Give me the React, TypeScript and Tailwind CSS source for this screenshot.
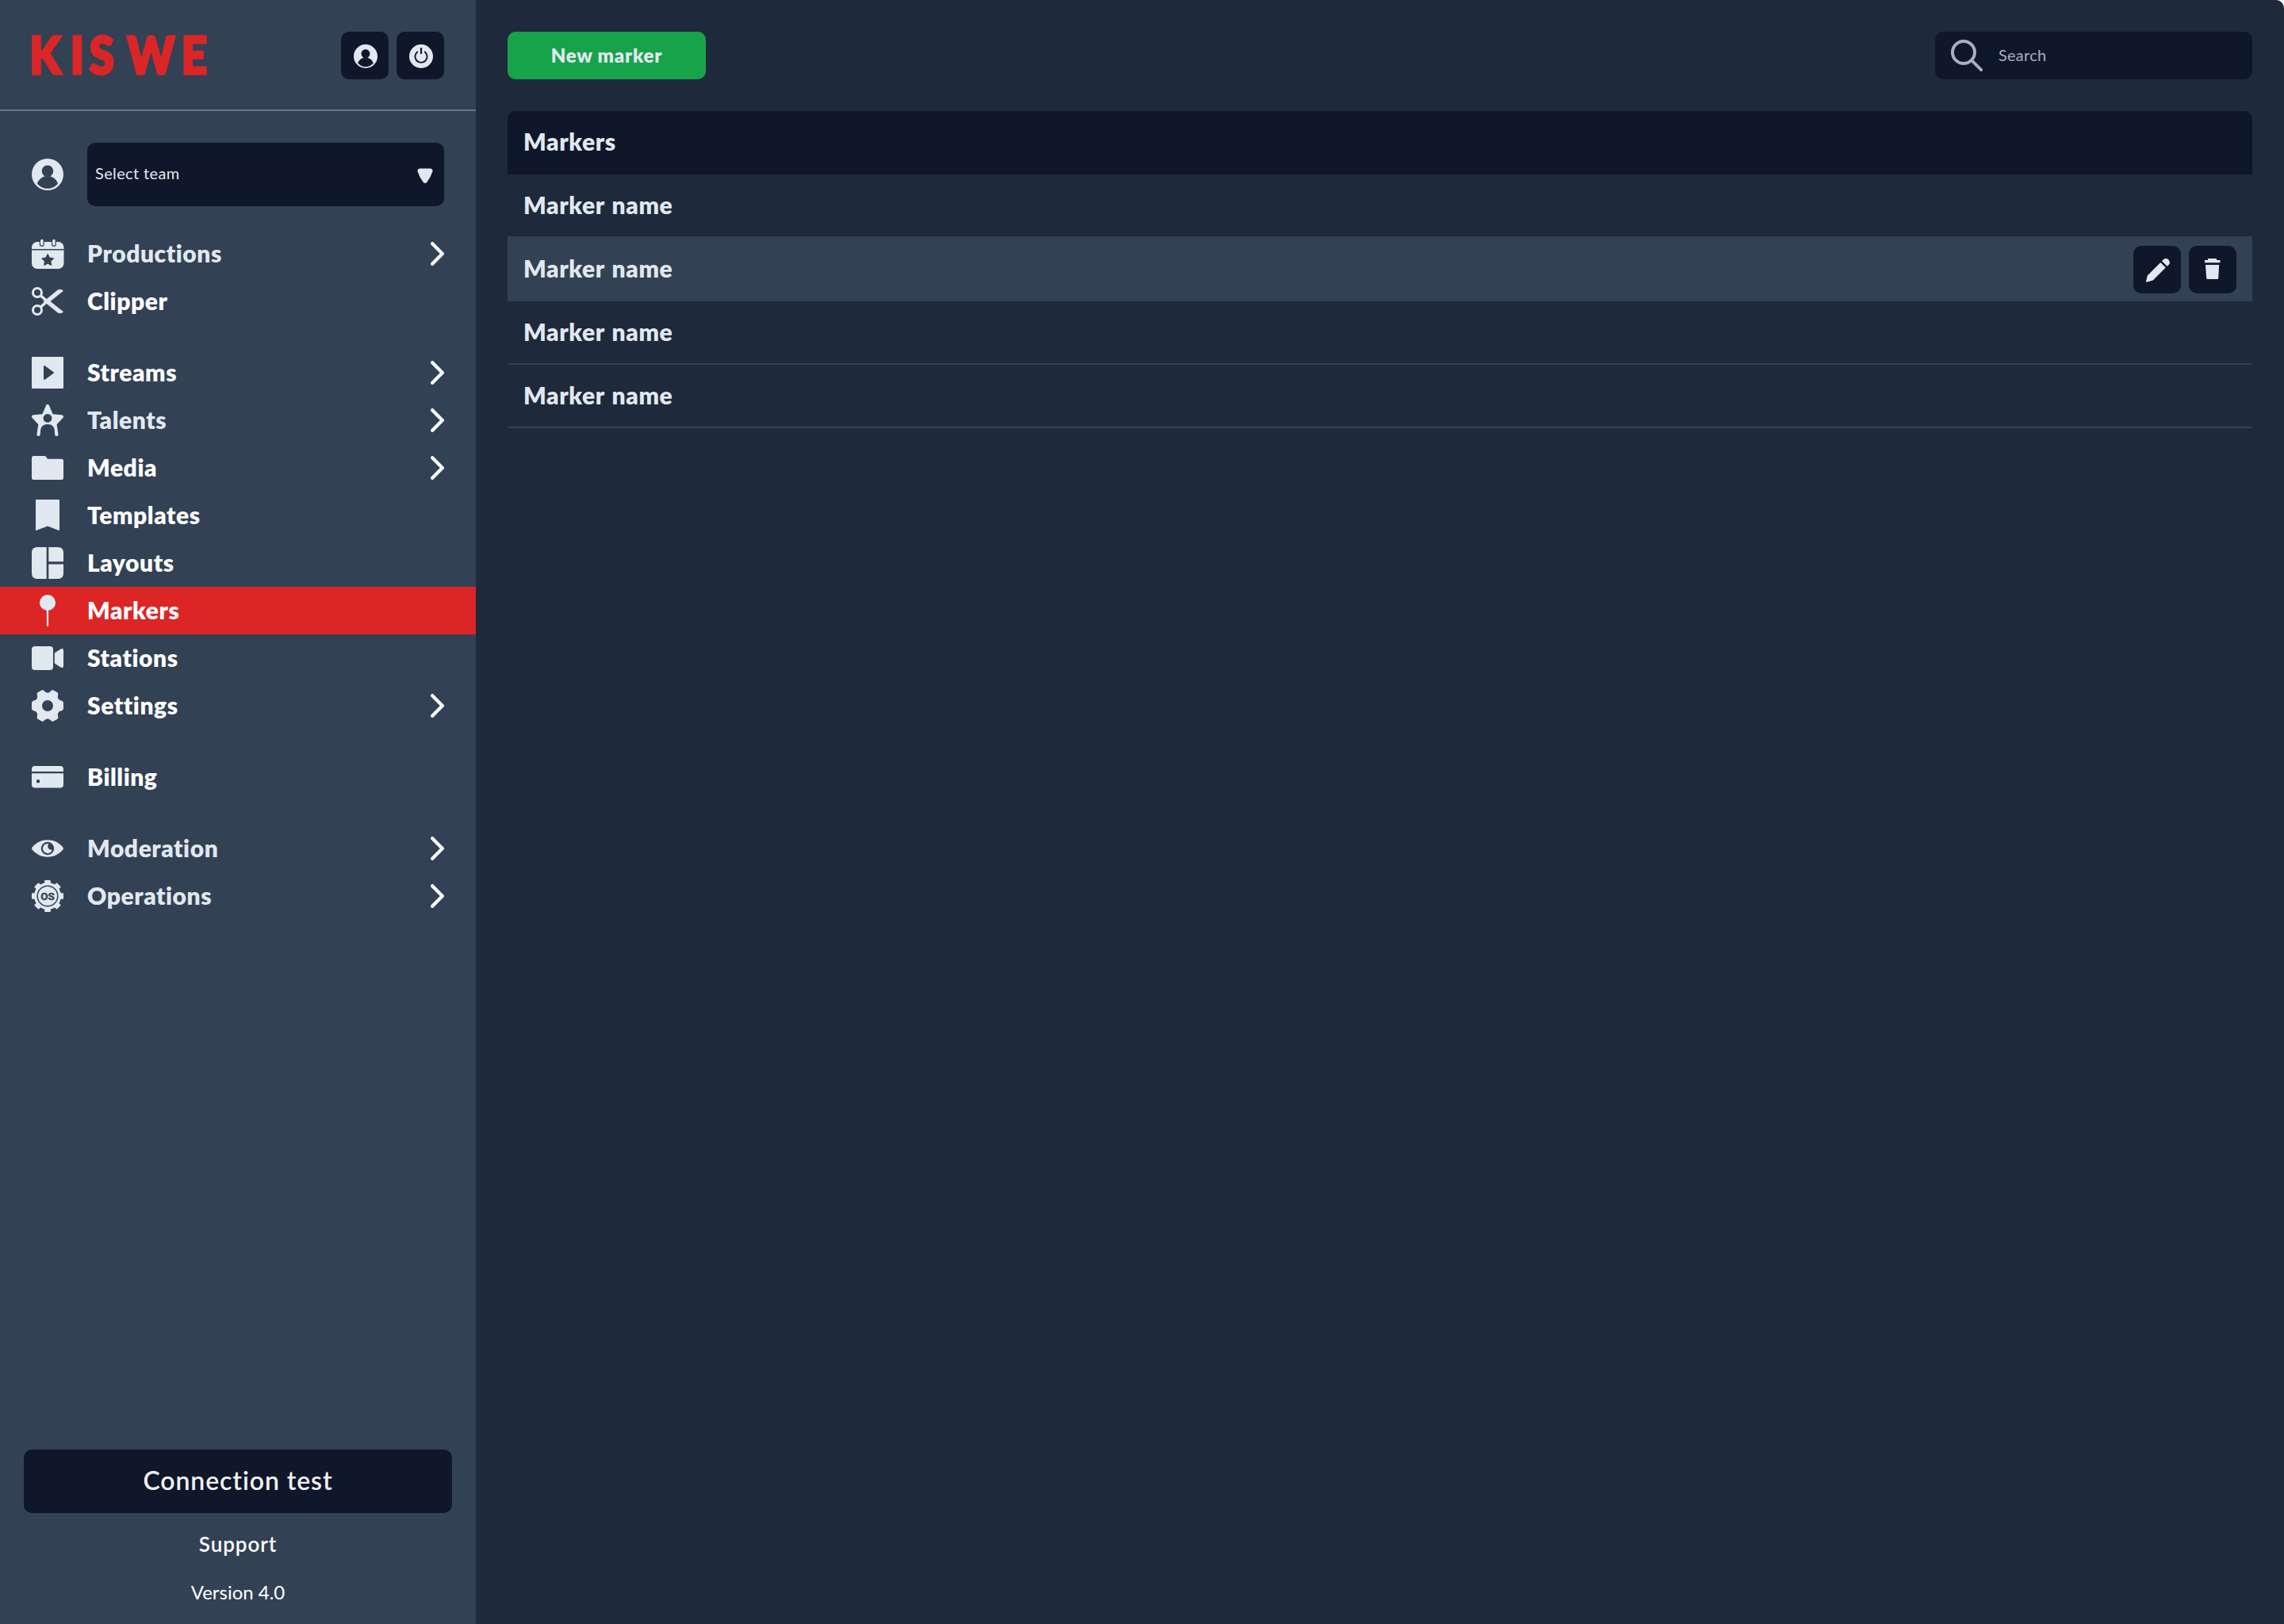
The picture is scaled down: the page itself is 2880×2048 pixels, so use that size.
import type { ReactNode } from 'react';

type IconProps = { className?: string };

const UserIcon = ({ className }: IconProps) => (
    <svg viewBox="0 0 40 40" className={className} fill="currentColor">
        <path
            fillRule="evenodd"
            d="M20 0a20 20 0 1 1 0 40a20 20 0 0 1 0-40zM20 8.4c-4 0-7.2 3.2-7.2 7.3c0 3 1.6 5.3 4 6.6C12 23.700 8.500 27 7 31.400C10.200 35.400 14.900 37.700 20 37.700S29.800 35.400 33 31.400C31.500 27 28 23.700 23.200 22.300c2.400-1.300 4-3.600 4-6.600c0-4.100-3.200-7.300-7.200-7.300z"
        />
    </svg>
);

const PowerIcon = ({ className }: IconProps) => (
    <svg viewBox="0 0 30 30" className={className} fill="none">
        <circle cx="15" cy="15" r="15" fill="currentColor" />
        <path d="M10.200 9.400a7.600 7.600 0 1 0 9.600 0" stroke="#0f172a" strokeWidth="1.900" strokeLinecap="round" />
        <path d="M15 5.200v6" stroke="#0f172a" strokeWidth="2.200" strokeLinecap="round" />
    </svg>
);

const CalendarIcon = ({ className }: IconProps) => (
    <svg viewBox="0 0 40 40" className={className} fill="currentColor">
        <rect x="0" y="5" width="40.500" height="34" rx="7" />
        <path d="M0 14.800h40.500" stroke="#334155" strokeWidth="1.400" />
        <path d="M12.800 3.500v4.500M27.900 3.500v4.500" stroke="#334155" strokeWidth="6" strokeLinecap="round" />
        <path d="M12.800 3.500v4.500M27.900 3.500v4.500" stroke="currentColor" strokeWidth="3.600" strokeLinecap="round" />
        <path
            d="M20.200 20.800l2.200 4.400 4.800.7-3.500 3.400.8 4.800-4.300-2.300-4.300 2.300.8-4.800-3.500-3.400 4.800-.7z"
            fill="#334155"
            stroke="#334155"
            strokeWidth="1.400"
            strokeLinejoin="round"
        />
    </svg>
);

const ScissorsIcon = ({ className }: IconProps) => (
    <svg viewBox="0 0 40 40" className={className} fill="none" stroke="currentColor">
        <circle cx="7" cy="9" r="5.500" strokeWidth="3" />
        <circle cx="7" cy="31" r="5.500" strokeWidth="3" />
        <path d="M11.500 13L20 20.500M11.500 27L20 19.500" strokeWidth="3.600" />
        <path
            d="M15 20.500L32.500 6.200c2.200-1.500 5-1.300 7 .6L23 20l16.500 13.200c-2 1.900-4.800 2.100-7 .6L15 19.500z"
            fill="currentColor"
            strokeWidth=".8"
            strokeLinejoin="round"
        />
    </svg>
);

const StreamIcon = ({ className }: IconProps) => (
    <svg viewBox="0 0 40 40" className={className} fill="currentColor">
        <rect width="40" height="40" rx="1.200" />
        <path d="M16 12l11 8-11 8z" fill="#334155" stroke="#334155" strokeWidth="2" strokeLinejoin="round" />
    </svg>
);

const TalentIcon = ({ className }: IconProps) => (
    <svg viewBox="0 0 40 40" className={className} fill="currentColor">
        <path
            fillRule="evenodd"
            d="M20 0c.9 0 1.600.5 2 1.400l4.600 10.800 11.300 1.100c2 .3 2.800 2.300 1.400 3.800l-7.700 8.100 1.900 12.600c.1 1.300-.7 2.200-2 2.200s-2.100-.8-2.300-2.100c-.4-4.600-.2-7-1.700-9.400C26 26 23.200 25 20 25s-6 1-7.600 3.500c-1.500 2.400-1.300 4.800-1.700 9.400C10.500 39.200 9.700 40 8.400 40s-2.100-.9-2-2.200l1.900-12.600L.7 17.100C-.7 15.600.1 13.600 2.100 13.300l11.300-1.100L18 1.400C18.400.5 19.100 0 20 0zM20 12a5.400 5.400 0 1 0 0 10.800a5.400 5.400 0 0 0 0-10.800z"
        />
    </svg>
);

const FolderIcon = ({ className }: IconProps) => (
    <svg viewBox="0 0 40 40" className={className} fill="currentColor">
        <path d="M2.500 5H16.500q1 0 1.600.9L20 8.800H37.500Q40 8.800 40 11.300V32.500Q40 35 37.500 35H2.500Q0 35 0 32.500V7.500Q0 5 2.500 5z" />
    </svg>
);

const BookmarkIcon = ({ className }: IconProps) => (
    <svg viewBox="0 0 40 40" className={className} fill="currentColor">
        <path d="M6 0H34q1 0 1 1V38q0 1.300-1.200.8L20 33.500 6.200 38.800Q5 39.300 5 38V1Q5 0 6 0z" />
    </svg>
);

const LayoutIcon = ({ className }: IconProps) => (
    <svg viewBox="0 0 40 40" className={className} fill="currentColor">
        <path d="M7 0H18.700V40H7Q0 40 0 33V7Q0 0 7 0zM21.300 0H33Q40 0 40 7V18.300H21.300zM21.300 21.500H40V33Q40 40 33 40H21.300z" />
    </svg>
);

const PinIcon = ({ className }: IconProps) => (
    <svg viewBox="0 0 40 40" className={className} fill="currentColor">
        <circle cx="20" cy="10" r="10" />
        <path d="M18.900 18h2.200v21q-1.100 2-2.200 0z" />
    </svg>
);

const CameraIcon = ({ className }: IconProps) => (
    <svg viewBox="0 0 40 40" className={className} fill="currentColor">
        <rect y="5" width="27" height="30" rx="4" />
        <path d="M28.800 13.500L36.500 8.500Q40 7 40 10V30Q40 33 36.500 31.500L28.800 26.500z" />
    </svg>
);

const GearIcon = ({ className }: IconProps) => (
    <svg viewBox="0 0 40 40" className={className} fill="currentColor">
        <path
            fillRule="evenodd"
            d="M12.500.4C14 -.2 15 .3 16 1.400C17.300 2.900 18.400 3.600 20 3.600S22.700 2.900 24 1.400C25 .3 26 -.2 27.500.4L32 2.900C33.400 3.800 33.600 5 33.200 6.400C32.600 8.300 32.700 9.500 33.500 11C34.300 12.400 35.300 13.100 37.200 13.500C38.700 13.900 39.700 14.600 39.900 16.200Q40.200 20 39.900 23.800C39.700 25.400 38.700 26.100 37.200 26.500C35.300 26.900 34.300 27.600 33.500 29C32.700 30.500 32.600 31.700 33.200 33.600C33.600 35 33.400 36.200 32 37.100L27.500 39.600C26 40.200 25 39.700 24 38.600C22.700 37.100 21.600 36.400 20 36.400S17.300 37.100 16 38.600C15 39.700 14 40.200 12.500 39.600L8 37.100C6.600 36.200 6.400 35 6.800 33.600C7.400 31.700 7.300 30.500 6.500 29C5.700 27.600 4.700 26.900 2.800 26.500C1.300 26.100.3 25.400.1 23.800Q-.2 20 .1 16.200C.3 14.600 1.300 13.900 2.800 13.500C4.700 13.100 5.700 12.400 6.500 11C7.300 9.500 7.400 8.300 6.800 6.400C6.400 5 6.600 3.800 8 2.900zM20 13a7 7 0 1 0 0 14a7 7 0 0 0 0-14z"
        />
    </svg>
);

const CardIcon = ({ className }: IconProps) => (
    <svg viewBox="0 0 40 40" className={className} fill="currentColor">
        <path
            fillRule="evenodd"
            d="M4 6H36Q40 6 40 10V13H0V10Q0 6 4 6zM0 15.300H40V29.500Q40 33.500 36 33.500H4Q0 33.500 0 29.500zM7 23.300Q6 23.300 6 24.300V26.300Q6 27.300 7 27.300H9Q10 27.300 10 26.300V24.300Q10 23.300 9 23.300z"
        />
    </svg>
);

const EyeIcon = ({ className }: IconProps) => (
    <svg viewBox="0 0 40 40" className={className} fill="currentColor">
        <path d="M.6 18.400C6 12.300 12.500 9.200 20 9.200S34 12.300 39.400 18.400Q40.600 20 39.400 21.600C34 27.700 27.500 30.800 20 30.800S6 27.700.6 21.600Q-.6 20 .6 18.400z" />
        <circle cx="20" cy="20" r="8.200" fill="#334155" />
        <path d="M21.500 14.200A6 6 0 1 0 25.800 21.500A4.400 4.400 0 0 1 21.500 14.200z" />
    </svg>
);

const OpsIcon = ({ className }: IconProps) => (
    <svg viewBox="0 0 40 40" className={className} fill="currentColor">
        <circle cx="20" cy="20" r="17" />
        {[0, 45, 90, 135].map((angle) => (
            <rect key={angle} x="16.200" y="0" width="7.600" height="40" rx=".6" transform={`rotate(${angle} 20 20)`} />
        ))}
        <circle cx="20" cy="20" r="12.800" fill="none" stroke="#334155" strokeWidth="1.500" />
        <text
            x="20"
            y="24.800"
            textAnchor="middle"
            fill="#334155"
            stroke="#334155"
            strokeWidth=".4"
            className="font-['Roboto'] font-bold text-[13.500px]"
        >
            OS
        </text>
    </svg>
);

const ChevronIcon = ({ className }: IconProps) => (
    <svg viewBox="0 0 17 30" className={className} fill="none">
        <path d="M2.200 2.200L14.800 15L2.200 27.800" stroke="currentColor" strokeWidth="4.300" strokeLinecap="round" strokeLinejoin="round" />
    </svg>
);

const SearchIcon = ({ className }: IconProps) => (
    <svg viewBox="0 0 40 40" className={className} fill="none" stroke="currentColor" strokeLinecap="round">
        <circle cx="16" cy="16" r="14" strokeWidth="4" />
        <path d="M26.800 26.800L38.200 38.200" strokeWidth="3.800" />
    </svg>
);

const PencilIcon = ({ className }: IconProps) => (
    <svg viewBox="0 0 30 30" className={className} fill="currentColor">
        <path d="M18.300 5L24.800 11.500L8.700 27.500L1 29.800Q0 30 0 29L1.800 21.400zM20 3.300L22 1.300Q25-1.200 28.400 1.600Q31.200 5 28.700 8L26.600 9.800z" />
    </svg>
);

const TrashIcon = ({ className }: IconProps) => (
    <svg viewBox="0 0 20 26" className={className} fill="currentColor">
        <path d="M0 2H4V.6Q4 0 4.600 0H14.400Q15 0 15 .6V2H19.500V5.200H0zM1 8H18.200L17.200 25Q17.100 26 16.100 26H3.300Q2.300 26 2.200 25z" />
    </svg>
);

const navGroups = [
    [
        { text: 'Productions', icon: CalendarIcon, expandable: true, muted: true },
        { text: 'Clipper', icon: ScissorsIcon }
    ],
    [
        { text: 'Streams', icon: StreamIcon, expandable: true },
        { text: 'Talents', icon: TalentIcon, expandable: true, muted: true },
        { text: 'Media', icon: FolderIcon, expandable: true },
        { text: 'Templates', icon: BookmarkIcon },
        { text: 'Layouts', icon: LayoutIcon },
        { text: 'Markers', icon: PinIcon, active: true },
        { text: 'Stations', icon: CameraIcon },
        { text: 'Settings', icon: GearIcon, expandable: true }
    ],
    [{ text: 'Billing', icon: CardIcon }],
    [
        { text: 'Moderation', icon: EyeIcon, expandable: true, muted: true },
        { text: 'Operations', icon: OpsIcon, expandable: true, muted: true }
    ]
];

const markers = [
    { id: 1, name: 'Marker name' },
    { id: 2, name: 'Marker name', hovered: true },
    { id: 3, name: 'Marker name' },
    { id: 4, name: 'Marker name' }
];

function IconButton({ label, children }: { label: string; children: ReactNode }) {
    return (
        <button aria-label={label} className="flex items-center justify-center w-[60px] h-[60px] rounded-[10px] bg-[#0f172a] text-[#e2e8f0]">
            {children}
        </button>
    );
}

function Logo() {
    return (
        <svg viewBox="-20 -10 270 110" className="w-[270px] h-[110px] -ml-5" role="img" aria-label="KISWE">
            <text
                x="-3 56 83.500 138.500 217"
                y="68.500"
                transform="scale(.87 1)"
                fill="#dc2626"
                stroke="#dc2626"
                strokeWidth="3.500"
                className="font-['Lato'] font-black text-[65px]"
            >
                KISWE
            </text>
        </svg>
    );
}

function Sidebar() {
    return (
        <aside className="flex flex-col flex-none w-[600px] h-full bg-[#334155]">
            <div className="flex items-center justify-between h-[140px] px-10 pt-0.5 border-b-2 border-[#64748b]">
                <Logo />
                <div className="flex gap-2.5">
                    <IconButton label="Account">
                        <UserIcon className="w-[30px] h-[30px] mt-0.5 ml-0.5" />
                    </IconButton>
                    <IconButton label="Log out">
                        <PowerIcon className="w-[30px] h-[30px] mt-0.5 ml-0.5" />
                    </IconButton>
                </div>
            </div>

            <div className="flex items-center gap-[30px] px-10 pt-10">
                <UserIcon className="w-10 h-10 text-[#e2e8f0]" />
                <button className="flex flex-1 items-center justify-between h-20 pl-2.5 pr-[14px] rounded-[10px] bg-[#0f172a] text-[#e2e8f0]">
                    <span className="pb-1 text-[20px] tracking-[0.36px]">Select team</span>
                    <svg viewBox="0 0 20 20" className="w-5 h-5 mt-1" fill="currentColor">
                        <path d="M3 .5H17Q20 1 19.500 4Q17 12 12.500 17.500Q10 20.500 7.500 17.500Q3 12 .5 4Q0 1 3 .5z" />
                    </svg>
                </button>
            </div>

            <nav className="flex flex-col gap-[30px] pt-[30px]">
                {navGroups.map((group, index) => (
                    <ul key={index}>
                        {group.map((item) => (
                            <li
                                key={item.text}
                                className={`flex items-center h-[60px] px-10 gap-[30px] ${item.active ? 'bg-[#dc2626]' : ''}`}
                            >
                                <item.icon className="flex-none w-10 h-10 overflow-visible text-[#e2e8f0]" />
                                <span
                                    className={`flex-1 pb-0.5 text-[30px] font-extrabold tracking-[0.55px] ${item.muted ? 'text-[#e2e8f0]' : 'text-white'}`}
                                >
                                    {item.text}
                                </span>
                                {item.expandable && <ChevronIcon className="w-[17px] h-[30px] text-[#f8fafc]" />}
                            </li>
                        ))}
                    </ul>
                ))}
            </nav>

            <div className="flex flex-col items-center mt-auto px-[30px] pb-[18px] text-white">
                <button className="w-full h-20 pb-0.5 rounded-[10px] bg-[#0f172a] text-[#f1f1f1] text-[32px] font-semibold tracking-[0.9px]">
                    Connection test
                </button>
                <a className="flex items-center h-[78px] text-[26px] font-semibold tracking-[0.95px]">Support</a>
                <span className="flex items-center h-[44px] text-[24px]">Version 4.0</span>
            </div>
        </aside>
    );
}

function MarkerTable() {
    return (
        <div className="flex flex-col text-[30px] font-extrabold tracking-[0.6px] [word-spacing:2px] text-[#e2e8f0]">
            <div className="flex items-center h-20 px-5 pb-1 rounded-t-[10px] bg-[#0f172a]">Markers</div>
            {markers.map((marker) => (
                <div
                    key={marker.id}
                    className={`flex items-center justify-between h-20 px-5 pt-0.5 border-b-2 border-[#334155] ${marker.hovered ? 'bg-[#334155] shadow-[0_-2px_0_#334155]' : ''}`}
                >
                    <span className="pb-1">{marker.name}</span>
                    {marker.hovered && (
                        <div className="flex gap-2.5">
                            <IconButton label="Edit marker">
                                <PencilIcon className="w-[30px] h-[30px] mt-0.5 ml-0.5" />
                            </IconButton>
                            <IconButton label="Delete marker">
                                <TrashIcon className="w-5 h-[26px] -mt-0.5" />
                            </IconButton>
                        </div>
                    )}
                </div>
            ))}
        </div>
    );
}

export default function App() {
    return (
        <div className="w-[2880px] h-[2048px] bg-white font-['Lato',sans-serif]">
            <div className="flex w-full h-full rounded-tr-[10px] overflow-hidden bg-[#1e293b]">
                <Sidebar />
                <main className="flex flex-col flex-1 gap-10 p-10">
                    <div className="flex items-center justify-between">
                        <button className="w-[250px] h-[60px] rounded-[10px] bg-[#16a34a] text-[#e2e8f0] text-[24px] font-extrabold tracking-[0.8px]">
                            New marker
                        </button>
                        <label className="flex items-center gap-5 w-[400px] h-[60px] px-5 rounded-[10px] bg-[#0f172a] text-[#a9afbf]">
                            <SearchIcon className="w-10 h-10" />
                            <span className="pb-0.5 text-[20px] tracking-[0.25px]">Search</span>
                        </label>
                    </div>
                    <MarkerTable />
                </main>
            </div>
        </div>
    );
}
